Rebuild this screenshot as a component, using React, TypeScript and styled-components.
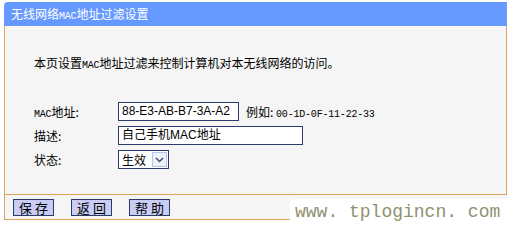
import React from "react";
import styled, { createGlobalStyle } from "styled-components";

const Global = createGlobalStyle`
  html, body { margin: 0; padding: 0; background: #ffffff; }
  body { font-family: "Liberation Sans", "Noto Sans CJK SC", sans-serif; font-size: 12px; color: #000; }
`;

const BORDER = "#DDA45E";
const CJK = `"Noto Sans CJK SC", "Liberation Sans", sans-serif`;
const SIMLATIN = `"Liberation Mono", "Noto Sans CJK SC", monospace`;

const Page = styled.div`
  position: relative;
  width: 510px;
  height: 227px;
  padding: 2px 0 0 4px;
  box-sizing: border-box;
  overflow: hidden;
`;

const Panel = styled.div`
  width: 503px;
  display: flex;
  flex-direction: column;
`;

const Header = styled.div`
  height: 24px;
  background: #6699ff;
  border-radius: 4px 0 0 0;
  color: #ffffff;
  font-family: ${CJK};
  font-size: 12px;
  line-height: 24px;
  padding-left: 7px;
`;

const Latin = styled.span`
  font-family: ${SIMLATIN};
  font-size: 10px;
  letter-spacing: -0.2px;
`;

const Body = styled.div`
  height: 169px;
  background: #f5f5f5;
  border-left: 1px solid ${BORDER};
  border-right: 1px solid ${BORDER};
  border-bottom: 1px solid ${BORDER};
  padding: 29px 0 0 29px;
  box-sizing: border-box;
`;

const Intro = styled.div`
  font-family: ${CJK};
  font-size: 12px;
  line-height: 16px;
  color: #000;
`;

const Form = styled.div`
  margin-top: 28px;
  display: grid;
  grid-template-columns: 84px auto;
  row-gap: 5px;
  align-items: center;
`;

const Label = styled.div`
  font-family: ${CJK};
  font-size: 12px;
  color: #000;
`;

const Field = styled.div`
  display: flex;
  align-items: center;
  gap: 7px;
`;

const Input = styled.div<{ $w: number }>`
  width: ${(p) => p.$w}px;
  height: 19px;
  box-sizing: border-box;
  border: 1px solid #2a3a6a;
  background: #ffffff;
  font-family: "Liberation Sans", ${CJK};
  font-size: 12px;
  line-height: 17px;
  padding-left: 3px;
  color: #000;
  white-space: nowrap;
`;

const Hint = styled.div`
  font-family: ${CJK};
  font-size: 12px;
  color: #000;
`;

const Select = styled.div`
  display: flex;
  width: 51px;
  height: 19px;
  box-sizing: border-box;
  border: 1px solid #2a3a6a;
  background: #ffffff;
`;

const SelectText = styled.div`
  flex: 1;
  font-family: ${CJK};
  font-size: 12px;
  line-height: 17px;
  padding-left: 3px;
`;

const Arrow = styled.div`
  width: 15px;
  margin: 1px;
  box-sizing: border-box;
  border: 1px solid #b8c6e6;
  background: #eef2fb;
  display: flex;
  align-items: center;
  justify-content: center;
`;

const Footer = styled.div`
  height: 25px;
  background: #f5f5f5;
  border-left: 1px solid ${BORDER};
  border-bottom: 1px solid ${BORDER};
  display: flex;
  align-items: center;
  gap: 17px;
  padding-left: 8px;
  box-sizing: border-box;
`;

const Button = styled.div`
  width: 41px;
  height: 17px;
  box-sizing: border-box;
  border: 1px solid #2a3a6a;
  background: #c9cdf3;
  font-family: ${CJK};
  font-size: 13px;
  line-height: 15px;
  text-align: center;
  letter-spacing: 3px;
  text-indent: 3px;
  color: #000;
`;

const Watermark = styled.div`
  position: absolute;
  left: 290px;
  top: 199px;
  width: 217px;
  height: 28px;
  background: #ffffff;
  color: #8e9270;
  font-family: "Liberation Mono", monospace;
  font-size: 18px;
  line-height: 26px;
  padding-left: 5px;
  box-sizing: border-box;
  white-space: nowrap;
`;

export default function App() {
  return (
    <Page>
      <Global />
      <Panel>
        <Header>
          无线网络<Latin>MAC</Latin>地址过滤设置
        </Header>
        <Body>
          <Intro>
            本页设置<Latin>MAC</Latin>地址过滤来控制计算机对本无线网络的访问。
          </Intro>
          <Form>
            <Label>
              <Latin>MAC</Latin>地址:
            </Label>
            <Field>
              <Input $w={121}>88-E3-AB-B7-3A-A2</Input>
              <Hint>
                例如: <Latin>00-1D-0F-11-22-33</Latin>
              </Hint>
            </Field>
            <Label>描述:</Label>
            <Field>
              <Input $w={185}>自己手机MAC地址</Input>
            </Field>
            <Label>状态:</Label>
            <Field>
              <Select>
                <SelectText>生效</SelectText>
                <Arrow>
                  <svg width="9" height="6" viewBox="0 0 9 6">
                    <path d="M1 1 L4.5 4.5 L8 1" fill="none" stroke="#3a4a7a" strokeWidth="1.5" />
                  </svg>
                </Arrow>
              </Select>
            </Field>
          </Form>
        </Body>
        <Footer>
          <Button>保存</Button>
          <Button>返回</Button>
          <Button>帮助</Button>
        </Footer>
      </Panel>
      <Watermark>www. tplogincn. com</Watermark>
    </Page>
  );
}
